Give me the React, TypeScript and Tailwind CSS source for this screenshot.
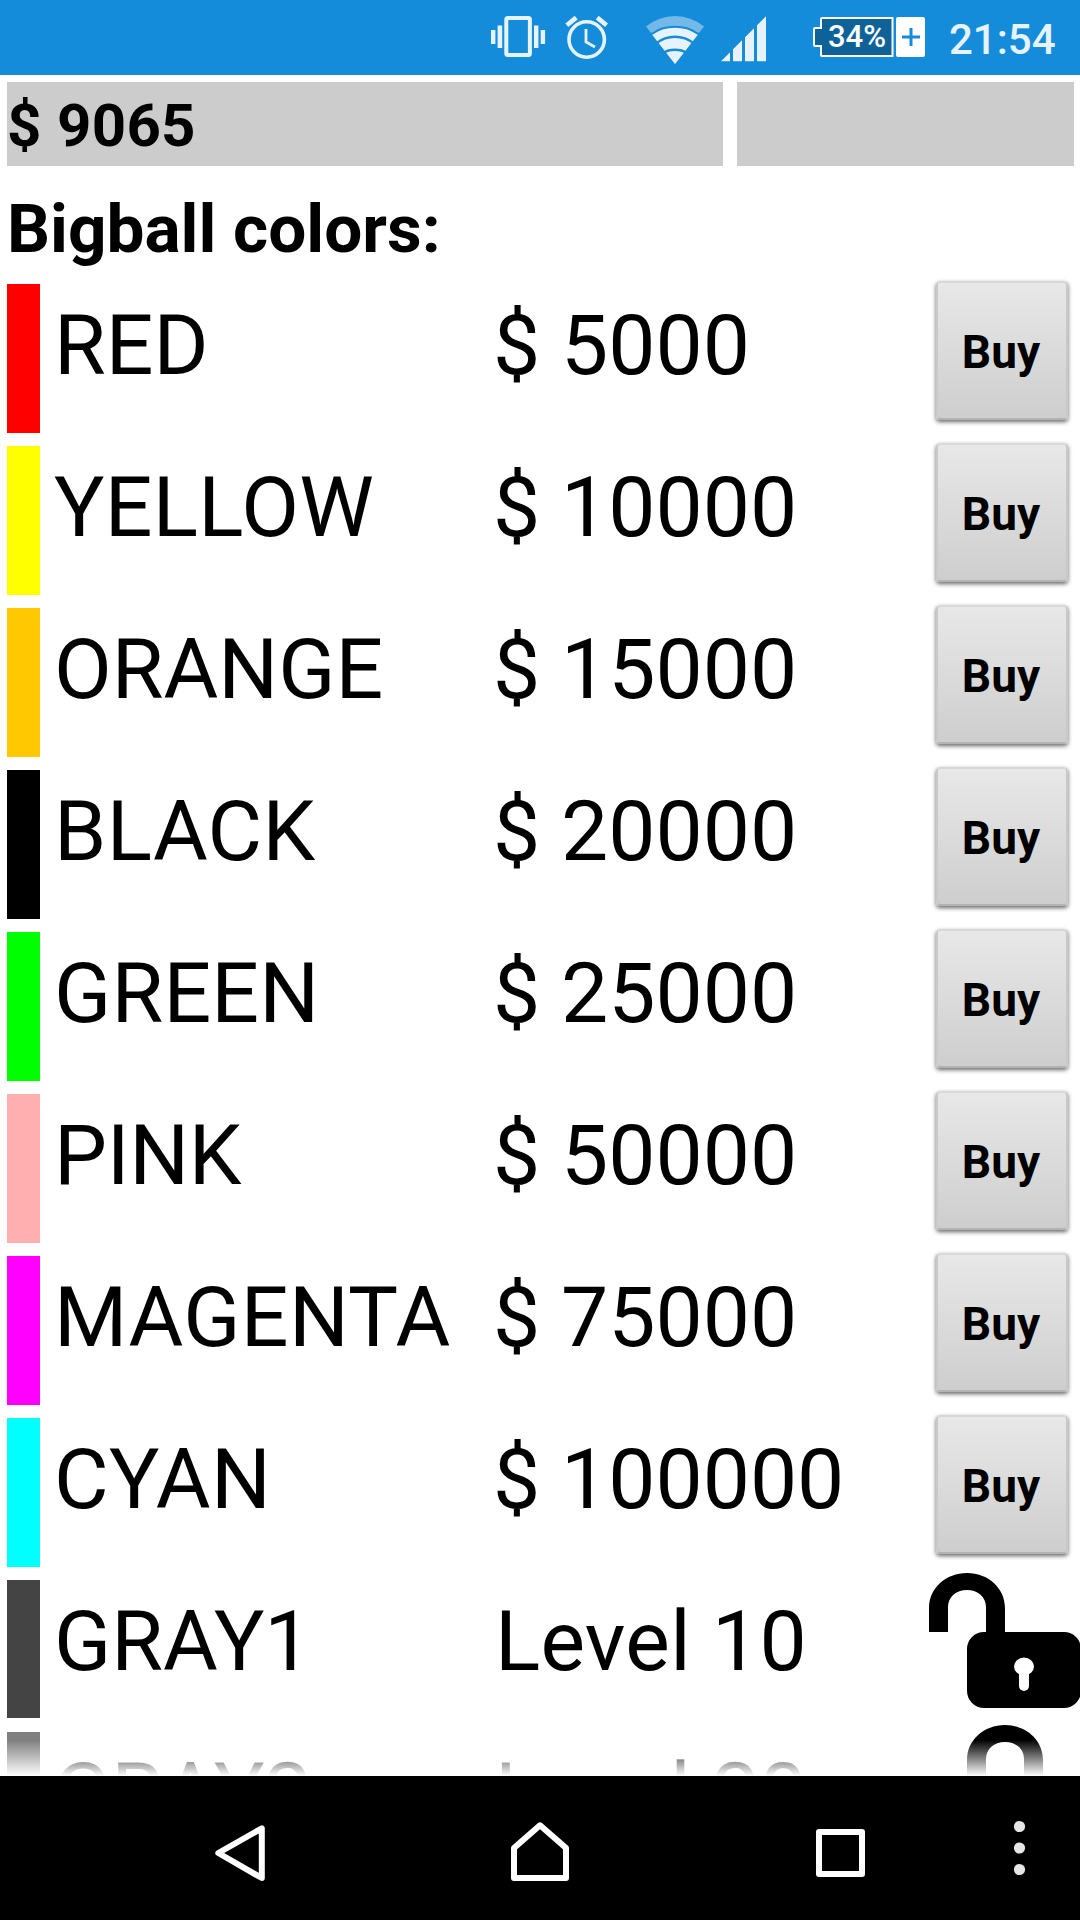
import React from 'react';

type Item = {
  name: string;
  price: string;
  swatch: string;
  state: 'buy' | 'open' | 'closed';
  tracking?: string;
};

const items: Item[] = [
  { name: 'RED', price: '$ 5000', swatch: 'bg-[#ff0000]', state: 'buy' },
  { name: 'YELLOW', price: '$ 10000', swatch: 'bg-[#ffff00]', state: 'buy', tracking: 'tracking-[0.3px]' },
  { name: 'ORANGE', price: '$ 15000', swatch: 'bg-[#ffc800]', state: 'buy' },
  { name: 'BLACK', price: '$ 20000', swatch: 'bg-black', state: 'buy', tracking: 'tracking-[0.3px]' },
  { name: 'GREEN', price: '$ 25000', swatch: 'bg-[#00ff00]', state: 'buy', tracking: 'tracking-[0.2px]' },
  { name: 'PINK', price: '$ 50000', swatch: 'bg-[#ffafaf]', state: 'buy', tracking: 'tracking-[-0.3px]' },
  { name: 'MAGENTA', price: '$ 75000', swatch: 'bg-[#ff00ff]', state: 'buy', tracking: 'tracking-[0.4px]' },
  { name: 'CYAN', price: '$ 100000', swatch: 'bg-[#00ffff]', state: 'buy', tracking: 'tracking-[0.3px]' },
  { name: 'GRAY1', price: 'Level 10', swatch: 'bg-[#444444]', state: 'open' },
  { name: 'GRAY2', price: 'Level 20', swatch: 'bg-[#808080]', state: 'closed' },
];

function StatusIcons() {
  return (
    <svg width="290" height="75" viewBox="486 0 290 75" fill="none" className="shrink-0">
      <rect x="506.3" y="18" width="23.6" height="37" rx="1.5" stroke="#e6f3fc" strokeWidth="4" />
      <path d="M497.6 25.5h4.6v22.5h-4.6zM491 30h4.4v14H491zM534 25.5h4.4v22.5H534zM540.7 30h4.4v14h-4.4z" fill="#e6f3fc" />
      <g stroke="#e6f3fc">
        <circle cx="586.7" cy="39.5" r="17.7" strokeWidth="3.6" />
        <path d="M586 29v13l9 5" strokeWidth="2.8" />
        <path d="M566.8 25.2l9.4-7.6M606.6 25.2l-9.4-7.6" strokeWidth="4.6" />
      </g>
      <path d="M675 64L646 26.5Q659 16 675 16T704 26.5Z" fill="#72b9e8" />
      <path d="M675 64L652 34.5Q662 27 675 27T698 34.5Z" fill="#e6f3fc" />
      <path d="M656 43.500Q664.500 36.800 675 36.800T694 43.500" stroke="#158cd9" strokeWidth="2.6" />
      <path d="M663 53Q668 49.800 675 49.800T687 53" stroke="#158cd9" strokeWidth="2.6" />
      <path d="M646 36L653.5 33Q662 26.8 675 26.8T696.500 33L704 36" stroke="#158cd9" strokeWidth="2" />
      <path d="M721 61.200L730 52.200V61.200ZM733 49.200L742 40.200V61.200H733ZM745 37.200L754 28.200V61.200H745ZM757 25.200L766 16.200V61.200H757Z" fill="#e6f3fc" />
    </svg>
  );
}

function StatusBar() {
  return (
    <header className="flex h-[75px] shrink-0 items-start bg-[#158cd9] pl-[486px]">
      <StatusIcons />
      <div className="ml-[37px] mt-[17px] flex h-10 items-center">
        <div className="relative flex h-10 w-[81px] shrink-0 items-center">
          <svg width="81" height="40" viewBox="0 0 81 40" className="absolute inset-0">
            <path d="M9 1H79.500V39H9Q8 39 8 38V29H2Q1 29 1 28V12Q1 11 2 11H8V2Q8 1 9 1Z" fill="#0f6298" stroke="#fff" strokeWidth="2" />
          </svg>
          <span className="relative pl-[15px] text-[31px] font-medium leading-10 text-white">34%</span>
        </div>
        <div className="ml-[2px] flex h-10 w-[29px] items-center justify-center rounded-[2px] bg-white">
          <svg width="18" height="18" viewBox="0 0 18 18">
            <path d="M9 0V18M0 9H18" stroke="#158cd9" strokeWidth="3" />
          </svg>
        </div>
      </div>
      <span className="ml-[24px] mt-[15px] text-[42px] font-medium leading-[50px] text-[#e6f3fc]">21:54</span>
    </header>
  );
}

function Lock({ open }: { open: boolean }) {
  const shift = open ? 0 : 38;
  return (
    <svg width="151" height="138" viewBox="0 0 151 138" className="ml-auto mt-[-7px] shrink-0">
      <path
        transform={`translate(${shift} 0)`}
        d="M0 59V35C0 15 17 0 38 0S76 15 76 35V60H57V34C57 24 49 17 38 17S19 24 19 34V59Z"
      />
      <rect x="38" y="59" width="114" height="76" rx="17" />
      <ellipse cx="95" cy="93.500" rx="10" ry="9" fill="#fff" />
      <rect x="90" y="96" width="10" height="22" rx="5" fill="#fff" />
    </svg>
  );
}

function BuyButton() {
  return (
    <button className="ml-auto mr-3 mt-[-3px] flex h-[139px] w-[132px] shrink-0 items-center justify-center rounded-[4px] border-2 border-x-[#c9c9c9] border-t-[#d8d8d8] border-b-[#b3b3b3] bg-linear-to-b from-[#e8e8e8] to-[#cecece] pr-[2px] pt-[4px] text-[46px] font-bold shadow-[0px_2px_4px_rgba(0,0,0,0.6)]">
      Buy
    </button>
  );
}

function Row({ item }: { item: Item }) {
  const buy = item.state === 'buy';
  return (
    <li className={`flex shrink-0 items-start pl-[7px] ${buy ? 'h-[162px]' : 'h-[152px]'}`}>
      <div className={`w-[33px] shrink-0 ${item.swatch} ${buy ? 'h-[149px]' : 'h-[138px]'}`} />
      <span
        className={`ml-[14px] shrink-0 whitespace-nowrap text-[84px] leading-[123px] ${item.tracking ?? ''} ${buy ? 'w-[439px]' : 'w-[441px]'}`}
      >
        {item.name}
      </span>
      <span className={`whitespace-nowrap text-[84px] leading-[123px] ${buy ? '' : 'tracking-[0.3px]'}`}>
        {item.price}
      </span>
      {buy ? <BuyButton /> : <Lock open={item.state === 'open'} />}
    </li>
  );
}

function NavBar() {
  return (
    <nav className="h-36 shrink-0 bg-black">
      <svg width="1080" height="144" viewBox="0 1776 1080 144" fill="none" stroke="#fff" strokeWidth="6" strokeLinejoin="round">
        <path d="M218.300 1853L261.800 1828.300V1878Z" />
        <path d="M540 1825.300L566 1848V1878H514V1848Z" />
        <path d="M819 1832H862V1874H819Z" />
        <g fill="#e6e6e6" stroke="none">
          <circle cx="1019.500" cy="1826.500" r="5.600" />
          <circle cx="1019.500" cy="1848" r="5.600" />
          <circle cx="1019.500" cy="1869.500" r="5.600" />
        </g>
      </svg>
    </nav>
  );
}

export default function App() {
  return (
    <div className="flex h-[1920px] w-[1080px] flex-col overflow-hidden bg-white font-['Roboto',sans-serif] text-black">
      <StatusBar />
      <div className="mt-[7px] flex h-[84px] shrink-0 gap-[14px] pl-[7px]">
        <div className="flex w-[716px] items-center bg-[#cccccc] pt-[3px] text-[60px] font-bold tracking-[0.3px]">$ 9065</div>
        <div className="w-[337px] bg-[#cccccc]" />
      </div>
      <main className="relative h-[1610px] shrink-0 overflow-hidden">
        <h1 className="flex h-[118px] items-center pl-[7px] pt-[7px] text-[67.5px] font-bold">Bigball colors:</h1>
        <ul className="flex flex-col">
          {items.map((item) => (
            <Row key={item.name} item={item} />
          ))}
        </ul>
        <div className="absolute inset-x-0 bottom-0 h-9 bg-linear-to-b from-white/0 to-white" />
      </main>
      <NavBar />
    </div>
  );
}
